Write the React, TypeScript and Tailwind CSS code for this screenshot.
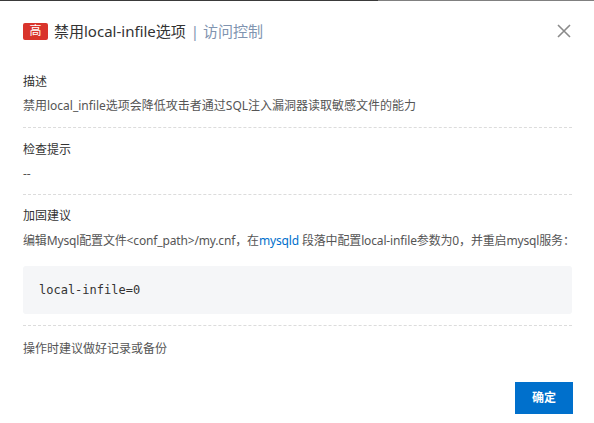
import React from "react";

const font = { fontFamily: '"Noto Sans", "Noto Sans CJK SC", sans-serif' };

function Dashed() {
  return <div className="border-t border-dashed border-[#dcdcdc]" />;
}

export default function App() {
  return (
    <div className="w-[594px] h-[423px] bg-white relative overflow-hidden" style={font}>
      <div className="flex h-px">
        <div className="w-[378px] bg-[#3a3a3a]" />
        <div className="flex-1 bg-[#808080]" />
      </div>
      <div className="pl-[23px] pr-[22px]">
        <div className="flex items-center justify-between pt-[20px] h-[40px]">
          <div className="flex items-center">
            <span className="inline-flex items-center justify-center w-[25px] h-[17px] bg-[#d9342b] text-white text-[12px] rounded-[2px] leading-none">高</span>
            <span className="ml-[6px] text-[15px] text-[#333] leading-none">禁用local-infile选项</span>
            <span className="ml-[5px] text-[15px] text-[#8094b0] leading-none">| 访问控制</span>
          </div>
          <svg width="16" height="16" viewBox="0 0 16 16">
            <path d="M2 2L14 14M14 2L2 14" stroke="#8a8a8a" strokeWidth="1.6" />
          </svg>
        </div>

        <div className="mt-[31px] text-[12px] text-[#333] leading-[20px]">描述</div>
        <div className="mt-[4px] text-[12px] text-[#555] leading-[20px]">禁用local_infile选项会降低攻击者通过SQL注入漏洞器读取敏感文件的能力</div>
        <div className="mt-[11px]"><Dashed /></div>

        <div className="mt-[12px] text-[12px] text-[#333] leading-[20px]">检查提示</div>
        <div className="mt-[4px] text-[12px] text-[#555] leading-[20px]">--</div>
        <div className="mt-[10px]"><Dashed /></div>

        <div className="mt-[11px] text-[12px] text-[#333] leading-[20px]">加固建议</div>
        <div className="mt-[5px] text-[12px] text-[#555] leading-[20px] whitespace-nowrap tracking-[-0.15px]">
          编辑Mysql配置文件&lt;conf_path&gt;/my.cnf，在<span className="text-[#0070cc]">mysqld</span> 段落中配置local-infile参数为0，并重启mysql服务：
        </div>
        <div className="mt-[15px] h-[48px] bg-[#f5f6f8] rounded-[3px] flex items-center px-[16px] text-[12px] text-[#333]" style={{ fontFamily: '"DejaVu Sans Mono", monospace' }}>
          local-infile=0
        </div>
        <div className="mt-[11px]"><Dashed /></div>

        <div className="mt-[13px] text-[12px] text-[#555] leading-[20px]">操作时建议做好记录或备份</div>

        <div className="flex justify-end mt-[23px]">
          <button className="w-[58px] h-[32px] bg-[#0070cc] text-white text-[12px] font-bold mr-[-1px]">确定</button>
        </div>
      </div>
    </div>
  );
}
